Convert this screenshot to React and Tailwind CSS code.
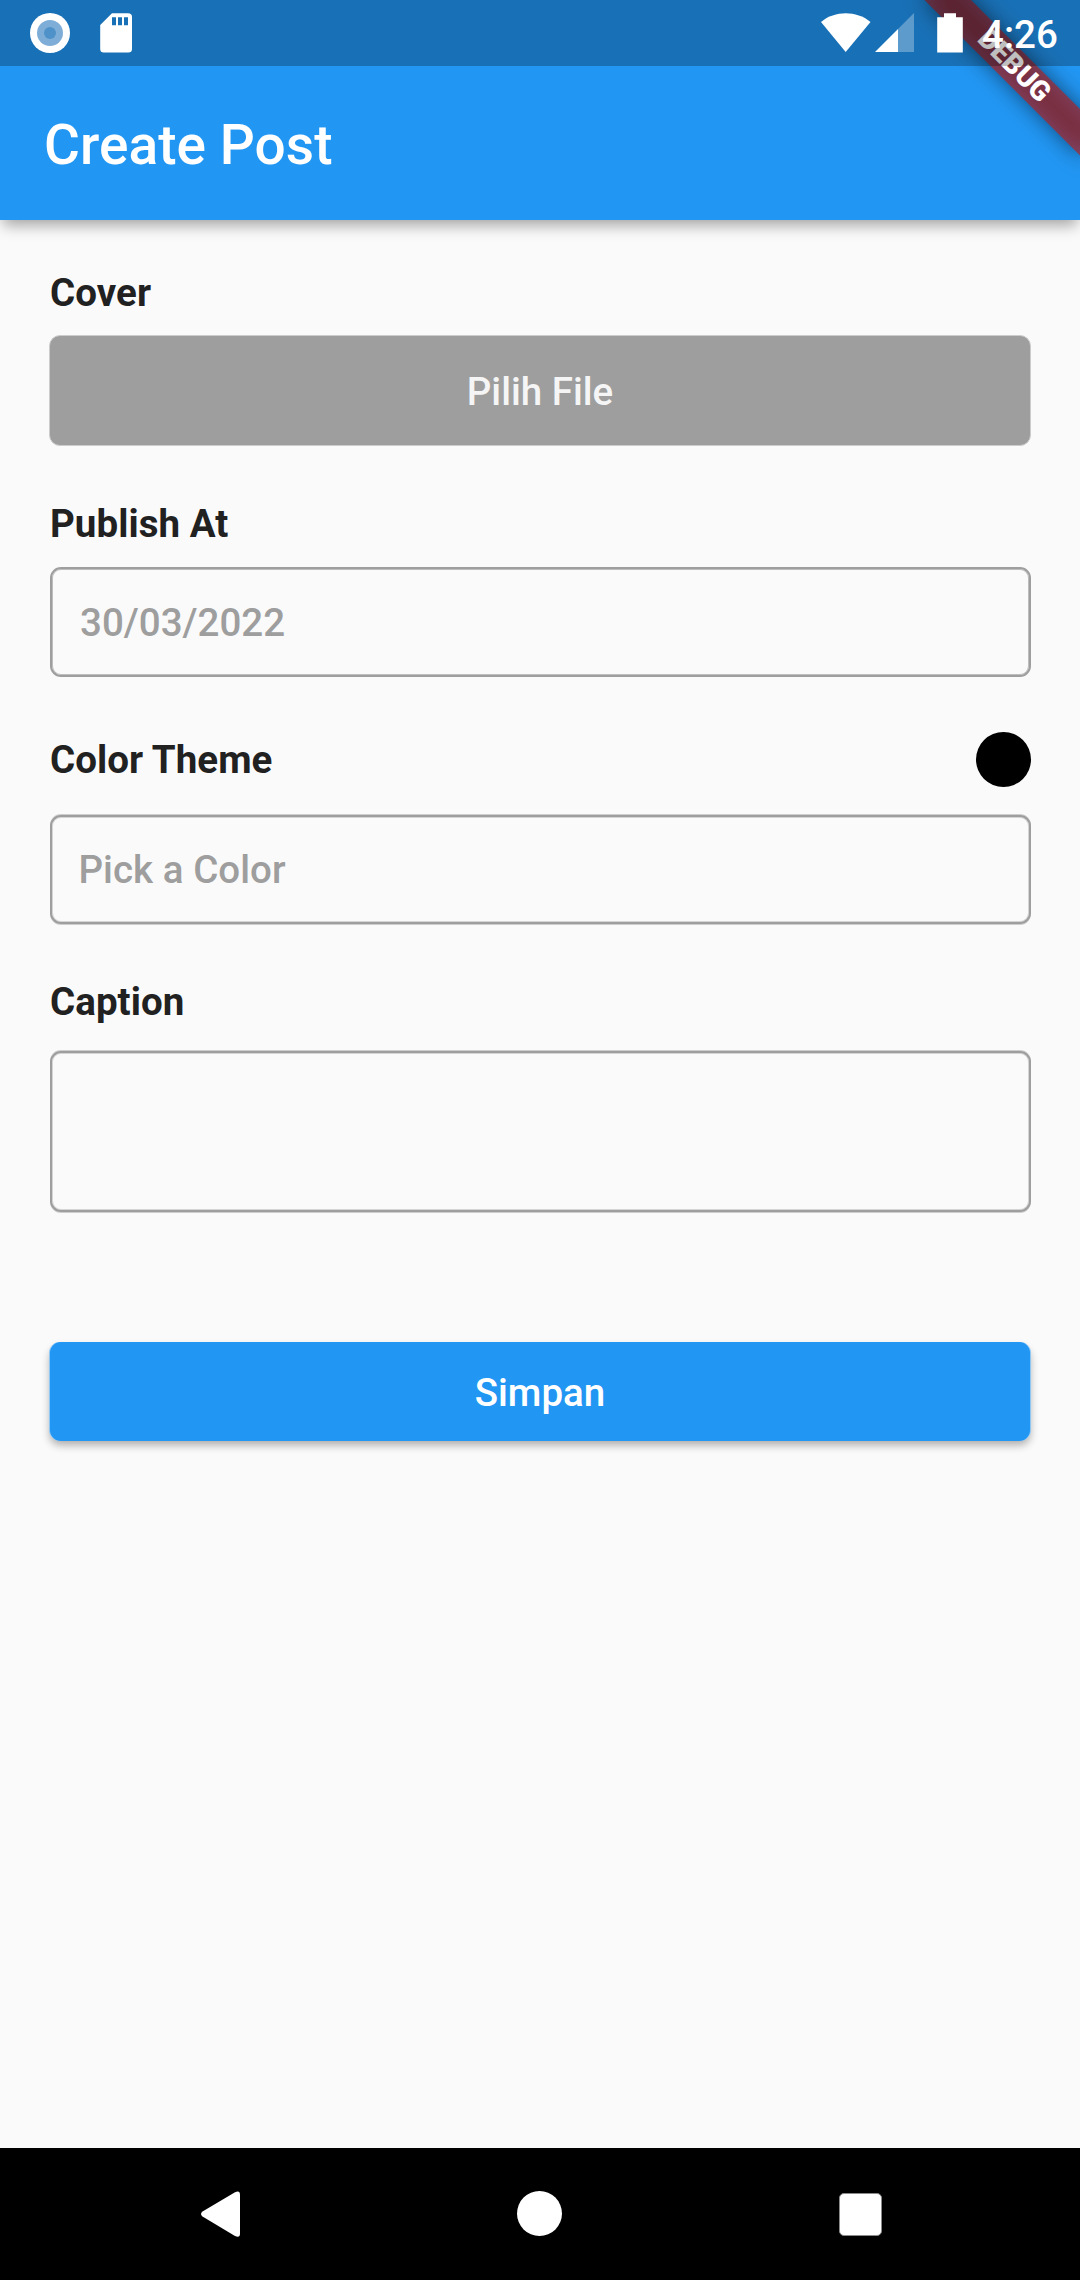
function StatusBar() {
  return (
    <div className="relative z-20 flex h-[66px] items-start bg-black/25 text-white">
      <svg className="ml-[30px] mt-[13px] h-10 w-10" viewBox="0 0 40 40">
        <circle cx="20" cy="20" r="20" fill="#fff" />
        <circle cx="20" cy="20" r="13" fill="#7eaed7" />
        <circle cx="20" cy="20" r="6" fill="#4f92c9" />
      </svg>
      <svg className="ml-[30px] mt-[13px] h-10 w-8" viewBox="0 0 32 40">
        <path
          fill="#fff"
          fillRule="evenodd"
          d="M12 .3H28Q32 .3 32 4V36Q32 39.5 28.3 39.5H3.8Q.2 39.5 .2 36V12ZM12 4.3V12.3H16V4.3ZM18 4.3V12.3H22V4.3ZM24 4.3V12.3H28V4.3Z"
        />
      </svg>
      <svg className="ml-auto mt-[13px] h-10 w-[50px]" viewBox="0 0 50 40">
        <path fill="#fff" d="M0 8.9C7 3 16 .2 24.7 .2S42.5 3 49.5 8.9L24.7 39Z" />
      </svg>
      <svg className="ml-[4px] mt-[13px] h-10 w-10" viewBox="0 0 40 40">
        <path fill="#fff" fillOpacity=".3" d="M39 0V39H23V16Z" />
        <path fill="#fff" d="M23 16V39H0Z" />
      </svg>
      <svg className="ml-[22px] mt-[13px] h-10 w-[26px]" viewBox="0 0 26 40">
        <path fill="#fff" d="M7 .2H19V4.2H25.8V39.6H.2V4.2H7Z" />
      </svg>
      <span className="ml-[19px] mr-[22px] mt-[12px] w-[76px] whitespace-nowrap text-[38.5px] font-medium leading-[45px]">
        4:26
      </span>
    </div>
  );
}

function DebugBanner() {
  return (
    <div className="pointer-events-none absolute right-0 top-0 z-10 h-[220px] w-[220px] overflow-hidden">
      <div className="absolute left-[110px] top-[77px] h-[33px] w-[220px] origin-[110px_-77px] rotate-45">
        <div className="absolute inset-0 bg-black/50 blur-[10.9px]" />
        <div className="relative flex h-full items-center justify-center bg-[#b71c1c]/63 text-[28.05px] font-black leading-none text-white">
          DEBUG
        </div>
      </div>
    </div>
  );
}

function Label({ children }) {
  return (
    <div className="text-[38.5px] font-bold leading-[45px] tracking-[0.05px] text-[#212121]">
      {children}
    </div>
  );
}

export default function App() {
  return (
    <div className="relative flex h-[2280px] w-[1080px] flex-col overflow-hidden bg-[#fafafa] font-['Roboto',sans-serif]">
      <header className="relative z-10 h-[220px] bg-[#2196f3] shadow-[0_8px_14px_-3px_rgba(0,0,0,0.36)]">
        <StatusBar />
        <DebugBanner />
        <h1 className="flex h-[154px] items-center pl-[44px] pt-[4px] text-[55px] font-medium leading-none tracking-[0.05px] text-white">
          Create Post
        </h1>
      </header>

      <main className="flex flex-1 flex-col pl-[49px] pr-[49px] pt-[50px]">
        <div className="flex flex-col pl-px">
          <Label>Cover</Label>
        </div>
        <button className="mt-[20px] flex h-[111px] items-center justify-center rounded-[11px] border border-[#cccccc] bg-[#9e9e9e] pt-[2px] text-[38.5px] font-medium leading-[45px] text-[#f5f5f5]">
          Pilih File
        </button>

        <div className="mt-[55px] flex flex-col pl-px">
          <Label>Publish At</Label>
          <div className="mt-[21px] flex h-[110px] items-center rounded-[11px] border-2 border-[#9e9e9e] pl-[28px] text-[38.5px] font-medium leading-[45px] text-[#9e9e9e] shadow-[inset_0_0_0_1px_#bdbdbd]">
            30/03/2022
          </div>

          <div className="mt-[55px] flex h-[55px] items-center justify-between">
            <Label>Color Theme</Label>
            <div className="h-[55px] w-[55px] rounded-full bg-black" />
          </div>
          <div className="mt-[27px] flex h-[111px] flex-col rounded-[11px] bg-[#cdcdcd] py-px">
            <div className="flex flex-1 items-center rounded-[11px] border-2 border-[#9e9e9e] bg-[#fafafa] pl-[26.5px] text-[38.5px] font-medium leading-[45px] tracking-[0.03px] text-[#9e9e9e] shadow-[inset_0_0_0_1px_#d5d5d5]">
              Pick a Color
            </div>
          </div>

          <div className="mt-[54px] flex flex-col">
            <Label>Caption</Label>
          </div>
          <div className="mt-[26px] flex h-[163px] flex-col rounded-[11px] bg-[#cdcdcd] py-px">
            <div className="flex-1 rounded-[11px] border-2 border-[#9e9e9e] bg-[#fafafa] shadow-[inset_0_0_0_1px_#d5d5d5]" />
          </div>
        </div>

        <button className="mt-[129px] flex h-[99px] items-stretch rounded-[11px] bg-[#2196f3]/50 px-px text-[38.5px] font-medium leading-[45px] text-white shadow-[0_5px_8px_-1px_rgba(0,0,0,0.32)]">
          <span className="flex flex-1 items-center justify-center rounded-[11px] bg-[#2196f3] pt-[2px]">
            Simpan
          </span>
        </button>
      </main>

      <nav className="flex h-[132px] items-start bg-black">
        <svg className="ml-[201px] mt-[43px] h-[47px] w-10" viewBox="0 0 40 47">
          <path fill="#fff" d="M1.5 20.6L34 1.3Q39 -1 39 4V42.5Q39 47.3 34 44.900L1.500 25.400Q-1.500 23 1.500 20.600Z" />
        </svg>
        <div className="ml-[276px] mt-[43px] h-[45px] w-[45px] rounded-full bg-white" />
        <div className="ml-[277px] mt-[45px] h-[43px] w-[43px] rounded-[5px] border border-[#8a8a8a] bg-white" />
      </nav>
    </div>
  );
}
